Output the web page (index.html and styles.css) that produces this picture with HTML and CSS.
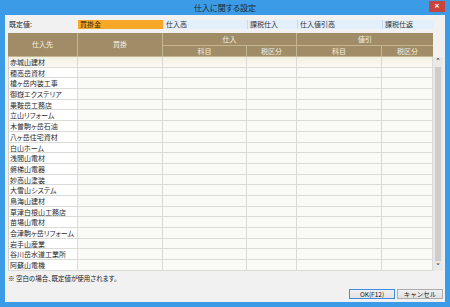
FILE: index.html
```html
<!DOCTYPE html>
<html lang="ja">
<head>
  <meta charset="UTF-8">
  <title>仕入に関する設定</title>
  <link rel="stylesheet" href="styles.css">
</head>
<body>
  <div class="window">
    <div class="titlebar">
      <span></span>
      <span class="title">仕入に関する設定</span>
      <span class="close">×</span>
    </div>
    <div class="content">
      <div class="defaults">
        <div class="def-label">既定値:</div>
        <div class="def-cell selected">買掛金</div>
        <div class="def-cell">仕入高</div>
        <div class="def-cell">課税仕入</div>
        <div class="def-cell">仕入値引高</div>
        <div class="def-cell">課税仕返</div>
      </div>

      <div class="table">
        <div class="thead">
          <div class="th span-rows">仕入先</div>
          <div class="th span-rows">買掛</div>
          <div class="th group-a">仕入</div>
          <div class="th group-b">値引</div>
          <div class="th">科目</div>
          <div class="th">税区分</div>
          <div class="th">科目</div>
          <div class="th">税区分</div>
        </div>
        <div class="tbody">
          <div class="rows" id="rows"></div>
          <div class="scrollbar">
            <div class="arrow">&#x2C4;</div>
            <div class="track"><div class="thumb"></div></div>
            <div class="arrow">&#x2C5;</div>
          </div>
        </div>
      </div>

      <div class="note">※ 空白の場合、既定値が使用されます。</div>

      <div class="buttons">
        <button class="btn primary">OK(F12)</button>
        <button class="btn">キャンセル</button>
      </div>
    </div>
  </div>

  <script>
    // 仕入先一覧
    const suppliers = [
      '赤城山建材', '穂高岳資材', '槍ヶ岳内装工事', '御嶽エクステリア', '乗鞍岳工務店',
      '立山リフォーム', '木曽駒ヶ岳石油', '八ヶ岳住宅資材', '白山ホーム', '浅間山電材',
      '磐梯山電器', '妙高山塗装', '大雪山システム', '鳥海山建材', '草津白根山工務店',
      '苗場山電材', '会津駒ヶ岳リフォーム', '岩手山産業', '谷川岳水道工業所', '阿蘇山電機'
    ];

    const rows = document.getElementById('rows');
    suppliers.forEach((name, i) => {
      const row = document.createElement('div');
      row.className = i === 0 ? 'row current' : 'row';
      row.innerHTML = `
        <div class="td name">${name}</div>
        <div class="td"></div>
        <div class="td"></div>
        <div class="td"></div>
        <div class="td"></div>
        <div class="td"></div>
      `;
      rows.appendChild(row);
    });
  </script>
</body>
</html>
```

FILE: styles.css
```css
body {
  margin: 0;
  font-family: "Noto Sans CJK JP", "Noto Sans", sans-serif;
  font-size: 7px;
  font-feature-settings: "palt";
  color: #333;
}
.window {
  width: 450px;
  height: 307px;
  box-sizing: border-box;
  padding: 0 5px 5px;
  background-color: #3c9be6;
  display: flex;
  flex-direction: column;
}
.titlebar {
  height: 15px;
  display: grid;
  grid-template-columns: 1fr auto 1fr;
  align-items: start;
}
.title {
  font-size: 8px;
  line-height: 15px;
  color: #1d2a36;
}
.close {
  justify-self: end;
  margin-top: 1px;
  width: 16px;
  height: 11px;
  background-color: #c8453d;
  color: white;
  font-family: "DejaVu Sans", sans-serif;
  font-size: 7px;
  font-weight: bold;
  line-height: 11px;
  text-align: center;
}
.content {
  flex: 1;
  background-color: #f1f1f1;
  padding: 5px 2px 3px 3px;
  display: flex;
  flex-direction: column;
}
.defaults {
  display: grid;
  grid-template-columns: 70px 85px 84px 50px 85px 51px;
  height: 9px;
  line-height: 9px;
}
.def-label {
  color: #222;
  padding-left: 1px;
}
.def-cell {
  background-color: #e3effb;
  border-left: 1px solid #c9dbee;
  padding-left: 2px;
}
.def-cell.selected {
  background-color: #f8a828;
  border-left: none;
  color: #3a2a00;
}
.table {
  margin-top: 4px;
}
.thead {
  width: 425px;
  display: grid;
  grid-template-columns: 70px 85px 84px 50px 85px 51px;
  grid-template-rows: 13px 11px;
  background-color: #a08d67;
}
.th {
  color: #f6f1e4;
  text-align: center;
  line-height: 11px;
  border-right: 1px solid #c5b692;
  border-bottom: 1px solid #c5b692;
}
.th.group-a,
.th.group-b {
  line-height: 12px;
}
.th.span-rows {
  grid-row: 1 / 3;
  line-height: 23px;
}
.th.group-a {
  grid-column: 3 / 5;
}
.th.group-b {
  grid-column: 5 / 7;
  border-right: none;
}
.th:last-child {
  border-right: none;
}
.tbody {
  display: flex;
  height: 214px;
}
.rows {
  width: 425px;
}
.row {
  display: grid;
  grid-template-columns: 70px 85px 84px 50px 85px 51px;
  height: 10.7px;
}
.td {
  background-color: #fafaf7;
  border-right: 1px solid #dadad6;
  border-bottom: 1px solid #dadad6;
  line-height: 10px;
  overflow: hidden;
  white-space: nowrap;
}
.td.name {
  background-color: #fff;
  padding-left: 1px;
  border-left: 1px solid #d0d0d0;
  color: #2a2a2a;
}
.row.current .td {
  background: linear-gradient(#f3efe1, #fbfaf5);
}
.scrollbar {
  width: 12px;
  display: flex;
  flex-direction: column;
  background-color: #e9e9e9;
}
.arrow {
  height: 9px;
  font-family: "DejaVu Sans", sans-serif;
  font-size: 9px;
  line-height: 11px;
  text-align: center;
  color: #222;
}
.track {
  flex: 1;
  padding: 1px 2px;
}
.thumb {
  height: 100%;
  background-color: #cdcdcd;
}
.note {
  margin-top: 2px;
  height: 10px;
  line-height: 10px;
  font-size: 6.5px;
  color: #222;
}
.buttons {
  margin-top: auto;
  display: flex;
  justify-content: flex-end;
  gap: 2px;
}
.btn {
  width: 46px;
  height: 10px;
  padding: 0;
  font-family: inherit;
  font-size: 6.5px;
  line-height: 8px;
  color: #222;
  background: linear-gradient(#f0f0f0, #e2e2e2);
  border: 1px solid #adadad;
}
.btn.primary {
  border-color: #3d8ee0;
}
```
